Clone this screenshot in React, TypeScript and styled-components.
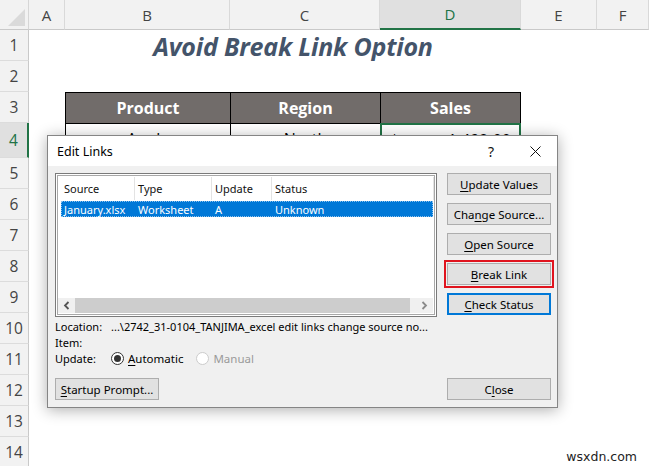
import React from 'react';
import styled, { createGlobalStyle } from 'styled-components';

const GlobalStyle = createGlobalStyle`
  html, body {
    margin: 0;
    padding: 0;
    background: #ffffff;
  }
  body {
    overflow: hidden;
  }
`;

const Page = styled.div`
  position: relative;
  width: 649px;
  height: 466px;
  overflow: hidden;
  background: #ffffff;
`;

/* ---------- spreadsheet ---------- */

const Sheet = styled.div`
  display: grid;
  grid-template-columns: 29px 36px 165px 150px 141px 76px 52px;
  grid-template-rows: 30px 31px 31px 31px 35px repeat(10, 31px);
  font-family: 'Open Sans', 'Noto Sans', sans-serif;
`;

const Corner = styled.div`
  position: relative;
  background: #f2f2f2;
  border-right: 1px solid #d6d6d6;
  border-bottom: 1px solid #c9c9c9;

  &::after {
    content: '';
    position: absolute;
    right: 3px;
    bottom: 3px;
    border-style: solid;
    border-width: 0 0 17px 17px;
    border-color: transparent transparent #dadada transparent;
  }
`;

const ColHead = styled.div<{ $active?: boolean }>`
  display: flex;
  align-items: center;
  justify-content: center;
  box-sizing: border-box;
  background: ${(p) => (p.$active ? '#e0e0e0' : '#f2f2f2')};
  color: ${(p) => (p.$active ? '#217346' : '#444444')};
  border-right: 1px solid #d9d9d9;
  border-bottom: ${(p) => (p.$active ? '2px solid #217346' : '1px solid #c9c9c9')};
  font-size: 15px;
`;

const RowHead = styled.div<{ $active?: boolean }>`
  display: flex;
  align-items: center;
  justify-content: center;
  box-sizing: border-box;
  background: ${(p) => (p.$active ? '#e0e0e0' : '#f2f2f2')};
  color: ${(p) => (p.$active ? '#217346' : '#444444')};
  border-right: ${(p) => (p.$active ? '2px solid #217346' : '1px solid #c9c9c9')};
  border-bottom: 1px solid #dcdcdc;
  font-size: 15.5px;
`;

const Cell = styled.div`
  background: #ffffff;
`;

const TitleCell = styled.div`
  grid-column: 3 / 6;
  display: flex;
  align-items: center;
  justify-content: center;
  color: #44546a;
  font-size: 25px;
  font-weight: 700;
  font-style: italic;
  letter-spacing: -0.2px;
`;

const HeadCell = styled.div<{ $last?: boolean }>`
  display: flex;
  align-items: center;
  justify-content: center;
  box-sizing: border-box;
  background: #716c6a;
  color: #ffffff;
  font-size: 16px;
  font-weight: 700;
  border-top: 1px solid #000;
  border-left: 1px solid #000;
  border-right: ${(p) => (p.$last ? '1px solid #000' : 'none')};
`;

const DataCell = styled.div<{ $active?: boolean; $align?: string }>`
  display: flex;
  align-items: flex-start;
  justify-content: ${(p) => p.$align || 'center'};
  box-sizing: border-box;
  padding: 4px 8px 0;
  font-size: 16px;
  color: #000;
  border-top: 1px solid #000;
  border-left: ${(p) => (p.$active ? '2px solid #217346' : '1px solid #000')};
  border-right: ${(p) => (p.$active ? '2px solid #217346' : 'none')};
  ${(p) => p.$active && 'border-top: 2px solid #217346;'}
`;

/* ---------- dialog ---------- */

const Dialog = styled.div`
  position: absolute;
  left: 47px;
  top: 135px;
  width: 511px;
  height: 273px;
  box-sizing: border-box;
  display: flex;
  flex-direction: column;
  background: #f0f0f0;
  border: 1px solid #858585;
  box-shadow: 0 2px 14px rgba(0, 0, 0, 0.32);
  font-family: 'Noto Sans', 'Open Sans', sans-serif;
  font-size: 11px;
  color: #000;
`;

const TitleBar = styled.div`
  height: 30px;
  flex: none;
  display: flex;
  align-items: center;
  background: #ffffff;
  padding-left: 9px;
  font-size: 12.5px;
`;

const TitleText = styled.div`
  flex: 1;
`;

const TitleIcon = styled.div`
  width: 44px;
  height: 30px;
  display: flex;
  align-items: center;
  justify-content: center;
  font-size: 14px;
  color: #111;
`;

const Body = styled.div`
  flex: 1;
  display: flex;
  flex-direction: column;
  padding: 7px 6px 7px 7px;
`;

const TopRow = styled.div`
  display: flex;
  gap: 10px;
`;

const ListBox = styled.div`
  width: 382px;
  height: 144px;
  box-sizing: border-box;
  border: 1px solid #7a7a7a;
  background: #ffffff;
  padding: 1px;
`;

const ListInner = styled.div`
  height: 100%;
  box-sizing: border-box;
  border: 1px solid #a8a8a8;
  display: flex;
  flex-direction: column;
  padding: 1px 0 0 3px;
`;

const ListCols = styled.div`
  display: grid;
  grid-template-columns: 74px 77px 60px 1fr;
`;

const HeaderCellL = styled.div`
  height: 23px;
  display: flex;
  align-items: center;
  padding-left: 3px;
  border-right: 1px solid #e3e3e3;
  color: #111;
`;

const SelectedRow = styled.div`
  display: grid;
  grid-template-columns: 74px 77px 60px 1fr;
  height: 16px;
  margin-top: 1px;
  margin-right: 1px;
  background: #0078d7;
  color: #ffffff;
  outline: 1px dotted rgba(255, 255, 255, 0.55);
  outline-offset: -1px;
`;

const RowCell = styled.div`
  display: flex;
  align-items: center;
  padding-left: 3px;
`;

const ListFill = styled.div`
  flex: 1;
`;

const HScroll = styled.div`
  height: 15px;
  display: flex;
  align-items: stretch;
  background: #f0f0f0;
  margin: 0 1px 1px -3px;
`;

const ScrollArrow = styled.div`
  width: 17px;
  display: flex;
  align-items: center;
  justify-content: center;
`;

const ScrollThumb = styled.div`
  flex: 1;
  background: #cdcdcd;
  margin-right: 6px;
`;

const ButtonCol = styled.div`
  width: 104px;
  display: flex;
  flex-direction: column;
  gap: 8px;
`;

const Btn = styled.div<{ $focus?: boolean; $marked?: boolean }>`
  height: 22px;
  box-sizing: border-box;
  display: flex;
  align-items: center;
  justify-content: center;
  background: #e1e1e1;
  border: ${(p) => (p.$focus ? '2px solid #0078d7' : '1px solid #adadad')};
  color: #000;
  font-size: 11.5px;
  ${(p) => p.$marked && 'outline: 2px solid #e0141e; outline-offset: 1px;'}
`;

const Key = styled.span`
  text-decoration: underline;
  text-underline-offset: 2px;
`;

const Info = styled.div`
  margin-top: 1px;
  display: flex;
  flex-direction: column;
`;

const InfoLine = styled.div`
  height: 16px;
  display: flex;
  align-items: center;
`;

const InfoLabel = styled.div`
  width: 56px;
  flex: none;
`;

const RadioOption = styled.div<{ $disabled?: boolean }>`
  display: flex;
  align-items: center;
  gap: 4px;
  margin-right: 13px;
  font-size: 11.5px;
  color: ${(p) => (p.$disabled ? '#9a9a9a' : '#000')};
`;

const Radio = styled.span<{ $checked?: boolean; $disabled?: boolean }>`
  width: 13px;
  height: 13px;
  box-sizing: border-box;
  border-radius: 50%;
  background: #ffffff;
  border: 1px solid ${(p) => (p.$disabled ? '#cccccc' : '#333333')};
  display: inline-flex;
  align-items: center;
  justify-content: center;

  &::after {
    content: '';
    width: 7px;
    height: 7px;
    border-radius: 50%;
    background: #333333;
    display: ${(p) => (p.$checked ? 'block' : 'none')};
  }
`;

const Footer = styled.div`
  margin-top: auto;
  display: flex;
  justify-content: space-between;
`;

const FooterBtn = styled(Btn)`
  width: 104px;
`;

const Watermark = styled.div`
  position: absolute;
  right: 12px;
  bottom: 2px;
  font-family: 'DejaVu Sans', sans-serif;
  font-size: 12.5px;
  color: #222;
`;

const cols = ['A', 'B', 'C', 'D', 'E', 'F'];

const Chevron = ({ dir, color }: { dir: 'left' | 'right'; color: string }) => (
  <svg width="7" height="9" viewBox="0 0 7 9">
    <path
      d={dir === 'left' ? 'M5.5 1 L2 4.5 L5.5 8' : 'M1.5 1 L5 4.5 L1.5 8'}
      fill="none"
      stroke={color}
      strokeWidth="1.8"
    />
  </svg>
);

const App: React.FC = () => {
  const rows = Array.from({ length: 14 }, (_, i) => i + 1);

  const renderRow = (r: number) => {
    const cells: React.ReactNode[] = [
      <RowHead key={`h${r}`} $active={r === 4}>
        {r}
      </RowHead>,
    ];
    if (r === 1) {
      cells.push(<Cell key="a1" />);
      cells.push(<TitleCell key="t">Avoid Break Link Option</TitleCell>);
      cells.push(<Cell key="e1" />, <Cell key="f1" />);
    } else if (r === 3) {
      cells.push(<Cell key="a3" />);
      cells.push(<HeadCell key="b3">Product</HeadCell>);
      cells.push(<HeadCell key="c3">Region</HeadCell>);
      cells.push(
        <HeadCell key="d3" $last>
          Sales
        </HeadCell>
      );
      cells.push(<Cell key="e3" />, <Cell key="f3" />);
    } else if (r === 4) {
      cells.push(<Cell key="a4" />);
      cells.push(<DataCell key="b4">Apple</DataCell>);
      cells.push(<DataCell key="c4">North</DataCell>);
      cells.push(
        <DataCell key="d4" $active $align="space-between">
          <span>$</span>
          <span>1,492.00</span>
        </DataCell>
      );
      cells.push(<Cell key="e4" />, <Cell key="f4" />);
    } else {
      cols.forEach((c) => cells.push(<Cell key={`${c}${r}`} />));
    }
    return cells;
  };

  return (
    <Page>
      <GlobalStyle />
      <Sheet>
        <Corner />
        {cols.map((c) => (
          <ColHead key={c} $active={c === 'D'}>
            {c}
          </ColHead>
        ))}
        {rows.map((r) => renderRow(r))}
      </Sheet>

      <Dialog>
        <TitleBar>
          <TitleText>Edit Links</TitleText>
          <TitleIcon>?</TitleIcon>
          <TitleIcon>
            <svg width="11" height="11" viewBox="0 0 11 11">
              <path d="M0.5 0.5 L10.5 10.5 M10.5 0.5 L0.5 10.5" stroke="#111" strokeWidth="1" />
            </svg>
          </TitleIcon>
        </TitleBar>

        <Body>
          <TopRow>
            <ListBox>
              <ListInner>
                <ListCols>
                  <HeaderCellL>Source</HeaderCellL>
                  <HeaderCellL>Type</HeaderCellL>
                  <HeaderCellL>Update</HeaderCellL>
                  <HeaderCellL>Status</HeaderCellL>
                </ListCols>
                <SelectedRow>
                  <RowCell>January.xlsx</RowCell>
                  <RowCell>Worksheet</RowCell>
                  <RowCell>A</RowCell>
                  <RowCell>Unknown</RowCell>
                </SelectedRow>
                <ListFill />
                <HScroll>
                  <ScrollArrow>
                    <Chevron dir="left" color="#555" />
                  </ScrollArrow>
                  <ScrollThumb />
                  <ScrollArrow>
                    <Chevron dir="right" color="#8a8a8a" />
                  </ScrollArrow>
                </HScroll>
              </ListInner>
            </ListBox>

            <ButtonCol>
              <Btn>
                <Key>U</Key>pdate Values
              </Btn>
              <Btn>
                Cha<Key>n</Key>ge Source...
              </Btn>
              <Btn>
                <Key>O</Key>pen Source
              </Btn>
              <Btn $marked>
                <Key>B</Key>reak Link
              </Btn>
              <Btn $focus>
                <Key>C</Key>heck Status
              </Btn>
            </ButtonCol>
          </TopRow>

          <Info>
            <InfoLine>
              <InfoLabel>Location:</InfoLabel>
              <span>...\2742_31-0104_TANJIMA_excel edit links change source no...</span>
            </InfoLine>
            <InfoLine>
              <InfoLabel>Item:</InfoLabel>
            </InfoLine>
            <InfoLine>
              <InfoLabel>Update:</InfoLabel>
              <RadioOption>
                <Radio $checked />
                <span>
                  <Key>A</Key>utomatic
                </span>
              </RadioOption>
              <RadioOption $disabled>
                <Radio $disabled />
                <span>Manual</span>
              </RadioOption>
            </InfoLine>
          </Info>

          <Footer>
            <FooterBtn>
              <Key>S</Key>tartup Prompt...
            </FooterBtn>
            <FooterBtn>
              C<Key>l</Key>ose
            </FooterBtn>
          </Footer>
        </Body>
      </Dialog>

      <Watermark>wsxdn.com</Watermark>
    </Page>
  );
};

export default App;
